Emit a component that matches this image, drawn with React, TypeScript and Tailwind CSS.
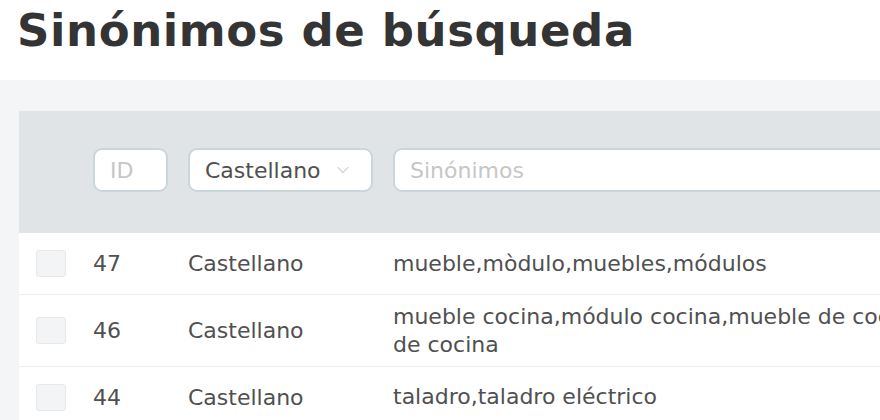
import { ChevronDown } from 'lucide-react';

const rows = [
  { id: 47, lang: 'Castellano', text: 'mueble,mòdulo,muebles,módulos', h: 'h-[61px]' },
  { id: 46, lang: 'Castellano', text: 'mueble cocina,módulo cocina,mueble de cocina,módulos de cocina', h: 'h-[72px]' },
  { id: 44, lang: 'Castellano', text: 'taladro,taladro eléctrico', h: 'h-[61px]' },
];

export default function App() {
  return (
    <div className="w-[880px] h-[420px] overflow-hidden bg-white font-['DejaVu_Sans',sans-serif] text-[#505050]">
      {/* cabecera */}
      <div className="h-[80px] pl-[17px] pt-[5px]">
        <h1 className="text-[45px] leading-[52px] font-bold tracking-[0.6px] text-[#343434] whitespace-nowrap">Sinónimos de búsqueda</h1>
      </div>

      <div className="bg-[#f4f5f7] pt-[31px] pl-[19px] h-[340px]">
        <div className="w-[1200px] bg-white">
          {/* filtros */}
          <div className="grid grid-cols-[74px_95px_205px_1fr] bg-[#e1e4e7] h-[122px] items-start pt-[37px]">
            <div />
            <div className="h-[44px] w-[75px] rounded-[9px] border-2 border-[#c9d6db] bg-white flex items-center pl-[15px] text-[22px] text-[#c6c6c6]">
              ID
            </div>
            <div className="h-[44px] w-[185px] rounded-[9px] border-2 border-[#c9d6db] bg-white flex items-center pl-[15px] pr-[18px] text-[22px] text-[#505050]">
              <span className="flex-1">Castellano</span>
              <ChevronDown size={20} strokeWidth={1.5} className="text-[#d3d7db]" />
            </div>
            <div className="h-[44px] w-[700px] rounded-[9px] border-2 border-[#c9d6db] bg-white flex items-center pl-[15px] text-[22px] text-[#c6c6c6]">
              Sinónimos
            </div>
          </div>

          {/* filas */}
          {rows.map((r, i) => (
            <div
              key={r.id}
              className={`grid grid-cols-[74px_95px_205px_1fr] items-center ${r.h} ${i > 0 ? 'border-t border-[#eceef0]' : ''}`}
            >
              <div className="pl-[17px]">
                <div className="w-[30px] h-[27px] rounded-[3px] bg-[#f3f4f6] border border-[#e6e8eb]" />
              </div>
              <div className="text-[22px]">{r.id}</div>
              <div className="text-[22px]">{r.lang}</div>
              <div className="text-[22px] leading-[28px] w-[665px]">{r.text}</div>
            </div>
          ))}
        </div>
      </div>
    </div>
  );
}
